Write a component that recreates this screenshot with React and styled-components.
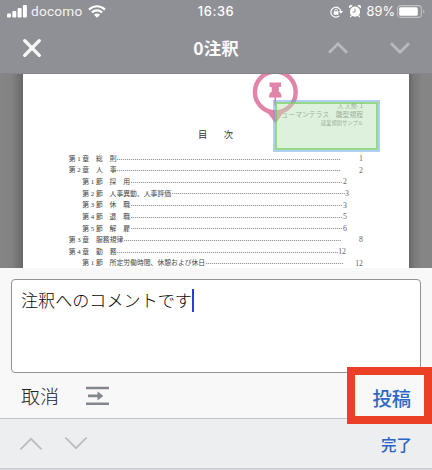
import React from 'react';
import styled, { createGlobalStyle } from 'styled-components';

const GlobalStyle = createGlobalStyle`
  * { box-sizing: border-box; }
  body {
    margin: 0;
    overflow: hidden;
    font-family: Inter, 'Noto Sans CJK JP', sans-serif;
  }
`;

const Screen = styled.div`
  display: flex;
  flex-direction: column;
  width: 432px;
  height: 470px;
  overflow: hidden;
  background: #f8f8f8;
`;

const TopArea = styled.header`
  flex: none;
  height: 74px;
  background: #8f9096;
  border-bottom: 1px solid #85868b;
  color: #fff;
`;

const StatusBar = styled.div`
  display: grid;
  grid-template-columns: 1fr auto 1fr;
  align-items: center;
  height: 23px;
  padding: 0 7px 0 7px;
  line-height: 23px;
`;

const StatusGroup = styled.div`
  display: flex;
  align-items: center;
  justify-content: ${({ $end }) => ($end ? 'flex-end' : 'flex-start')};
`;

const Carrier = styled.span`
  margin: 0 6px 0 4px;
  font-family: Roboto, sans-serif;
  font-size: 13.6px;
  letter-spacing: 0.25px;
  color: #f3f3f4;
`;

const Clock = styled.span`
  font-size: 12.8px;
  font-weight: 500;
  letter-spacing: 0.6px;
`;

const BatteryLevel = styled.span`
  margin: 0 2px 0 6px;
  font-size: 12.8px;
  letter-spacing: 0;
`;

const AlarmSvg = styled.svg`
  margin-left: 6px;
`;

const TitleBar = styled.div`
  display: grid;
  grid-template-columns: 1fr auto 1fr;
  align-items: center;
  height: 49px;
  padding: 0 22px;
`;

const Title = styled.h1`
  margin: 0;
  font: 700 17.5px/24px 'Noto Sans CJK JP', sans-serif;
  color: #fafafa;
`;

const IconButton = styled.button`
  display: flex;
  padding: 0;
  border: 0;
  background: none;
  color: inherit;
`;

const Steps = styled.div`
  display: flex;
  justify-content: flex-end;
  gap: 42px;
  color: #b9babd;
`;

const Viewer = styled.main`
  flex: none;
  display: flex;
  height: 194px;
  padding: 0 23px;
  overflow: hidden;
  background: linear-gradient(90deg, #858585 0, #828282 12px, #686868 23px, #686868 409px, #7a7a7a 414px, #858585 422px);
`;

const Page = styled.article`
  position: relative;
  flex: 1;
  height: 194px;
  padding-top: 48.5px;
  background: #fff;
  color: #444;
  overflow: hidden;
`;

const DocHeading = styled.h2`
  display: flex;
  gap: 16.5px;
  margin: 0 0 0 175px;
  height: 30.2px;
  color: #333;
  font: 400 9.3px/22px 'Noto Sans CJK JP', sans-serif;
`;

const TocRow = styled.div`
  display: flex;
  align-items: center;
  width: ${({ $end, $nested }) => $end - ($nested ? 82.3 : 68.7)}px;
  height: 11.65px;
  margin-left: ${({ $nested }) => ($nested ? 59.3 : 45.7)}px;
  font: 400 6.83px/11.65px 'Noto Sans CJK JP', sans-serif;
  white-space: pre;
`;

const Digit = styled.span`
  width: 6.83px;
  text-align: center;
  font-family: 'Liberation Serif', serif;
`;

const Leader = styled.span`
  flex: 1;
  height: 1px;
  margin: 1px ${({ $gap }) => $gap}px 0 1px;
  background: repeating-linear-gradient(90deg, #9c9c9c 0 1.2px, #e8e8e8 1.2px 2px);
`;

const PageNumber = styled.span`
  font: 400 7.8px/11px 'Liberation Serif', serif;
  color: #666;
`;

const Highlight = styled.div`
  position: absolute;
  left: 250px;
  top: 26px;
  width: 107px;
  height: 52px;
  background: rgba(189, 227, 185, 0.5);
  border: 2px solid rgba(95, 161, 229, 0.5);
  background-clip: padding-box;
  padding: 0 15px 0 2px;
  white-space: nowrap;
  color: #9daf9b;
  font-family: 'Noto Sans CJK JP', sans-serif;

  &::after {
    content: '';
    position: absolute;
    inset: 0;
    border: 2px solid rgba(104, 200, 76, 0.6);
  }
`;

const HighlightBody = styled.div`
  display: flex;
  flex-direction: column;
  align-items: flex-end;
  overflow: hidden;
`;

const HighlightLine = styled.span`
  font-size: ${({ $size }) => $size}px;
  line-height: ${({ $height }) => $height}px;
`;

const PinMarker = styled.svg`
  position: absolute;
  left: 228px;
  top: -5px;
`;

const Composer = styled.section`
  flex: none;
  display: flex;
  flex-direction: column;
  height: 151px;
  padding: 11px 11px 0;
  background: #f8f8f8;
  border-bottom: 1px solid #c3c4c6;
`;

const CommentField = styled.div`
  display: flex;
  align-items: flex-start;
  height: 94px;
  padding: 8px 9px;
  border: 1px solid #939393;
  border-radius: 4px;
  background: #fff;
  color: #080808;
  font: 300 17.1px/24px 'Noto Sans CJK JP', sans-serif;
`;

const Caret = styled.i`
  width: 2px;
  height: 23px;
  margin-top: 1px;
  background: #3038df;
`;

const Actions = styled.div`
  display: flex;
  align-items: center;
  height: 45px;
  padding-left: 10px;
`;

const CancelButton = styled.button`
  margin: 1px 27px 0 0;
  padding: 0;
  border: 0;
  background: none;
  color: #222;
  font: 300 19px/28px 'Noto Sans CJK JP', sans-serif;
`;

const PostFrame = styled.div`
  position: relative;
  display: flex;
  flex: none;
  align-items: center;
  justify-content: flex-end;
  width: 85px;
  height: 57px;
  margin: 0 -11px 0 auto;
  padding: 5px 13px 0 0;
  border: 8px solid #ec4026;
`;

const PostButton = styled.button`
  margin: 0;
  padding: 0;
  border: 0;
  background: none;
  color: #2c68c5;
  font: 500 19.3px/28px 'Noto Sans CJK JP', sans-serif;
`;

const Accessory = styled.footer`
  flex: none;
  display: flex;
  align-items: center;
  height: 50px;
  padding: 0 20px;
  gap: 22.5px;
  background: #edeef0;
  border-bottom: 1px solid #c9cacf;
  color: #bbbcbe;
`;

const DoneButton = styled.button`
  margin-left: auto;
  padding: 0;
  border: 0;
  background: none;
  color: #2865c6;
  font: 500 15.5px/24px 'Noto Sans CJK JP', sans-serif;
`;

const KeyboardEdge = styled.div`
  flex: 1;
  background: #d8d9de;
`;

const Signal = () => (
  <svg width="20" height="13" viewBox="0 0 20 13" fill="#fff">
    <rect x="0" y="8.5" width="4" height="4" rx="1" />
    <rect x="5.3" y="6" width="4" height="6.5" rx="1" />
    <rect x="10.6" y="3" width="4" height="9.5" rx="1" />
    <rect x="15.9" y="0" width="4" height="12.5" rx="1" />
  </svg>
);

const Wifi = () => (
  <svg width="18" height="13" viewBox="0 0 18 13" fill="none" stroke="#fff" strokeWidth="2.2">
    <path d="M1 4.6C5.6 .1 12.4 .1 17 4.6M3.9 7.5C6.8 4.7 11.2 4.7 14.1 7.5" />
    <path d="M6 9.7C7.7 8.1 10.3 8.1 12 9.7L9 12.8Z" fill="#fff" stroke="none" />
  </svg>
);

const RotationLock = () => (
  <svg width="13" height="12" viewBox="0 0 13 12" fill="none" stroke="#fff">
    <path d="M9.3 9.9A5 5 0 1 1 10.9 5.5" strokeWidth="1.2" />
    <path d="M8.8 5H13L10.9 7.8Z" fill="#fff" stroke="none" />
    <rect x="3.7" y="5.2" width="4.8" height="3.5" rx=".5" fill="#fff" stroke="none" />
    <path d="M4.7 5.5V4.6a1.4 1.4 0 0 1 2.8 0v.9" strokeWidth=".9" />
  </svg>
);

const Alarm = () => (
  <AlarmSvg width="12" height="13" viewBox="0 0 12 13" fill="#fff">
    <circle cx="6" cy="6.7" r="5.1" />
    <path d="M.3 3.3A2 2 0 0 1 3.6.8ZM11.7 3.3A2 2 0 0 0 8.4.8ZM2 10l1 1-1.4 1.6-.8-.7ZM10 10l-1 1 1.4 1.6.8-.7Z" />
    <path d="M6 3.5V7H3.5" stroke="#8f9096" strokeWidth="1" fill="none" />
  </AlarmSvg>
);

const BatteryIcon = () => (
  <svg width="28" height="13" viewBox="0 0 28 13">
    <rect x=".6" y=".6" width="23.8" height="11.8" rx="3.2" fill="none" stroke="#c0c1c4" strokeWidth="1.1" />
    <rect x="2.2" y="2.2" width="18.6" height="8.6" rx="1.6" fill="#fff" />
    <path d="M26 4.5q1.6 .5 1.6 2t-1.6 2Z" fill="#b6b7ba" />
  </svg>
);

const CloseIcon = () => (
  <svg width="20" height="20" viewBox="0 0 20 20" fill="none" stroke="#fff" strokeWidth="3.3" strokeLinecap="round">
    <path d="M2.7 2.7L17.3 17.3M17.3 2.7L2.7 17.3" />
  </svg>
);

const Chevron = ({ down, width, height, stroke, round }) => (
  <svg
    width={width}
    height={height}
    viewBox={`0 0 ${width} ${height}`}
    fill="none"
    stroke="currentColor"
    strokeWidth={stroke}
    strokeLinecap={round ? 'round' : 'butt'}
  >
    <path
      d={
        down
          ? `M1 1.2L${width / 2} ${height - 1.8}L${width - 1} 1.2`
          : `M1 ${height - 1.2}L${width / 2} 1.8L${width - 1} ${height - 1.2}`
      }
    />
  </svg>
);

const IndentIcon = () => (
  <svg width="24" height="20" viewBox="0 0 24 20" fill="#83868b">
    <path d="M0 .8H23V3.2H0ZM0 16.6H23V19H0ZM2 8.6H11.5V5.2L17.3 9.9 11.5 14.6V11.2H2Z" />
  </svg>
);

const Pin = () => (
  <PinMarker width="50" height="60" viewBox="0 0 50 60">
    <path d="M13 39L24.5 54.5L36 39Z" fill="#e283a9" />
    <circle cx="24.3" cy="23" r="20.4" fill="#fff" stroke="#e283a9" strokeWidth="4.4" />
    <path d="M18.5 13.5H30V18H27.8V22.8C30 23.8 30.5 25.3 30.5 28.6H25.1V35.5L24.2 37.5 23.4 35.5V28.6H18C18 25.3 18.6 23.8 20.8 22.8V18H18.5Z" fill="#e283a9" />
  </PinMarker>
);

const entries = [
  { n: '1', unit: '章', label: '総　則', page: '1', end: 363, gap: 18.5 },
  { n: '2', unit: '章', label: '人　事', page: '2', end: 363, gap: 18.5 },
  { n: '1', unit: '節', label: '採　用', page: '2', end: 347, nested: true },
  { n: '2', unit: '節', label: '人事異動、人事評価', page: '3', end: 349, nested: true },
  { n: '3', unit: '節', label: '休　職', page: '3', end: 347, nested: true },
  { n: '4', unit: '節', label: '退　職', page: '5', end: 347, nested: true },
  { n: '5', unit: '節', label: '解　雇', page: '6', end: 347, nested: true },
  { n: '3', unit: '章', label: '服務規律', page: '8', end: 363, gap: 18.5 },
  { n: '4', unit: '章', label: '勤　務', page: '12', end: 346 },
  { n: '1', unit: '節', label: '所定労働時間、休憩および休日', page: '12', end: 363, gap: 12, nested: true },
];

export default function App() {
  return (
    <Screen>
      <GlobalStyle />
      <TopArea>
        <StatusBar>
          <StatusGroup>
            <Signal />
            <Carrier>docomo</Carrier>
            <Wifi />
          </StatusGroup>
          <Clock>16:36</Clock>
          <StatusGroup $end>
            <RotationLock />
            <Alarm />
            <BatteryLevel>89%</BatteryLevel>
            <BatteryIcon />
          </StatusGroup>
        </StatusBar>
        <TitleBar>
          <IconButton aria-label="閉じる"><CloseIcon /></IconButton>
          <Title>0注釈</Title>
          <Steps>
            <Chevron width={20} height={12} stroke={2.7} />
            <Chevron down width={20} height={12} stroke={2.7} />
          </Steps>
        </TitleBar>
      </TopArea>
      <Viewer>
        <Page>
          <DocHeading><span>目</span><span>次</span></DocHeading>
          {entries.map((e, i) => (
            <TocRow key={i} $end={e.end} $nested={e.nested}>
              <span>第</span>
              <Digit>{e.n}</Digit>
              <span>{e.unit}　{e.label}</span>
              <Leader $gap={e.gap || 0} />
              <PageNumber>{e.page}</PageNumber>
            </TocRow>
          ))}
          <Pin />
          <Highlight>
            <HighlightBody>
              <HighlightLine $size={5.8} $height={7}>人 人規- 1</HighlightLine>
              <HighlightLine $size={6.8} $height={10}>ューマンテラス　雛型規程</HighlightLine>
              <HighlightLine $size={5.3} $height={9}>就業規則サンプル</HighlightLine>
            </HighlightBody>
          </Highlight>
        </Page>
      </Viewer>
      <Composer>
        <CommentField>注釈へのコメントです<Caret /></CommentField>
        <Actions>
          <CancelButton>取消</CancelButton>
          <IndentIcon />
          <PostFrame><PostButton>投稿</PostButton></PostFrame>
        </Actions>
      </Composer>
      <Accessory>
        <Chevron width={22} height={13} stroke={1.8} round />
        <Chevron down width={22} height={13} stroke={1.8} round />
        <DoneButton>完了</DoneButton>
      </Accessory>
      <KeyboardEdge />
    </Screen>
  );
}
